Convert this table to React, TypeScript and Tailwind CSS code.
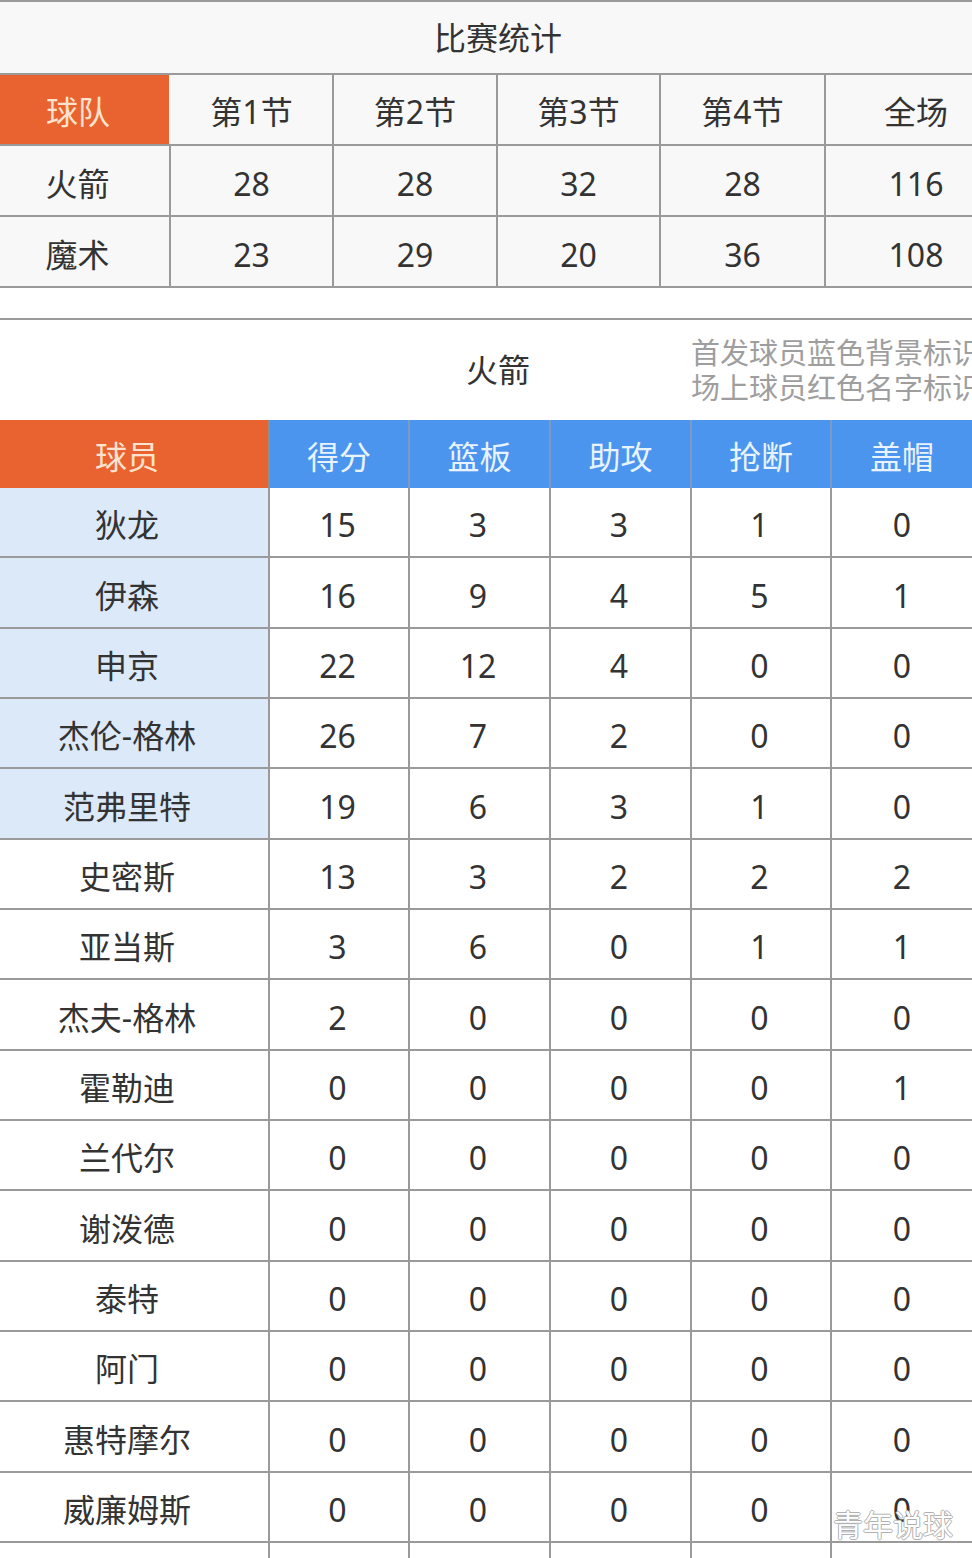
import React from "react";

const quarterRows = [
  ["火箭", "28", "28", "32", "28", "116"],
  ["魔术", "23", "29", "20", "36", "108"],
];

const players: [string, string, string, string, string, string][] = [
  ["狄龙", "15", "3", "3", "1", "0"],
  ["伊森", "16", "9", "4", "5", "1"],
  ["申京", "22", "12", "4", "0", "0"],
  ["杰伦-格林", "26", "7", "2", "0", "0"],
  ["范弗里特", "19", "6", "3", "1", "0"],
  ["史密斯", "13", "3", "2", "2", "2"],
  ["亚当斯", "3", "6", "0", "1", "1"],
  ["杰夫-格林", "2", "0", "0", "0", "0"],
  ["霍勒迪", "0", "0", "0", "0", "1"],
  ["兰代尔", "0", "0", "0", "0", "0"],
  ["谢泼德", "0", "0", "0", "0", "0"],
  ["泰特", "0", "0", "0", "0", "0"],
  ["阿门", "0", "0", "0", "0", "0"],
  ["惠特摩尔", "0", "0", "0", "0", "0"],
  ["威廉姆斯", "0", "0", "0", "0", "0"],
];

const rowHeights = ["h-[70px]", "h-[71px]", "h-[70px]"];

const topGrid = "grid grid-cols-[171px_163px_164px_163px_165px_1fr]";
const playerGrid = "grid grid-cols-[270px_140px_141px_141px_140px_1fr]";

export default function App() {
  return (
    <div className="relative w-[972px] h-[1558px] overflow-hidden bg-white font-['Noto_Sans','Noto_Sans_CJK_SC',sans-serif] text-[#333333] text-[32px] leading-none">
      {/* Top quarter table */}
      <div className="bg-[#f8f8f8]">
        <div className="h-[75px] border-y-2 border-[#9a9a9a] flex items-center justify-center pl-[24px]">
          比赛统计
        </div>
        <div className={`${topGrid} h-[71px] border-b-2 border-[#9a9a9a]`}>
          <div className="bg-[#e8632f] text-[#fde3cf] flex items-center justify-center border-r-2 border-[#f8f8f8] pr-[13px] pt-[4px]">
            球队
          </div>
          {["第1节", "第2节", "第3节", "第4节"].map((q) => (
            <div key={q} className="flex items-center justify-center border-r-2 border-[#9a9a9a] pt-[4px]">
              {q}
            </div>
          ))}
          <div className="flex items-center justify-center pl-[34px] pt-[4px]">全场</div>
        </div>
        {quarterRows.map((r) => (
          <div key={r[0]} className={`${topGrid} h-[71px] border-b-2 border-[#9a9a9a]`}>
            {r.map((c, i) => (
              <div
                key={i}
                className={
                  i === 0
                    ? "flex items-center justify-center border-r-2 border-[#9a9a9a] pr-[14px] pt-[6px]"
                    : i === 5
                    ? "flex items-center justify-center pl-[34px] pt-[6px]"
                    : "flex items-center justify-center border-r-2 border-[#9a9a9a] pt-[6px]"
                }
              >
                {c}
              </div>
            ))}
          </div>
        ))}
      </div>

      <div className="h-[30px]" />

      {/* Team header */}
      <div className="relative h-[102px] border-t-2 border-[#9a9a9a] flex items-center justify-center pl-[24px]">
        <span>火箭</span>
        <div className="absolute left-[691px] top-[15px] whitespace-nowrap text-[29px] leading-[35px] text-[#9e9e9e]">
          <div>首发球员蓝色背景标识</div>
          <div>场上球员红色名字标识</div>
        </div>
      </div>

      {/* Player header row */}
      <div className={`${playerGrid} h-[68px] text-[#e8f3ff]`}>
        <div className="bg-[#e8632f] text-[#fde3cf] flex items-center justify-center border-r-2 border-[#9a8a80] pr-[14px] pt-[6px]">
          球员
        </div>
        {["得分", "篮板", "助攻", "抢断", "盖帽"].map((h, i) => (
          <div
            key={h}
            className={
              i === 4
                ? "bg-[#4b95ee] flex items-center justify-center pt-[6px]"
                : "bg-[#4b95ee] flex items-center justify-center border-r-2 border-[#7d9bc2] pt-[6px]"
            }
          >
            {h}
          </div>
        ))}
      </div>

      {/* Player rows */}
      {players.map((p, idx) => (
        <div
          key={p[0]}
          className={`${playerGrid} ${rowHeights[idx % 3]} border-b-2 border-[#9a9a9a]`}
        >
          {p.map((c, i) => (
            <div
              key={i}
              className={
                i === 0
                  ? idx < 5
                    ? "bg-[#dbe9f9] flex items-center justify-center border-r-2 border-[#9a9a9a] pr-[14px] pt-[6px]"
                    : "flex items-center justify-center border-r-2 border-[#9a9a9a] pr-[14px] pt-[6px]"
                  : i === 5
                  ? "flex items-center justify-center pt-[6px]"
                  : "flex items-center justify-center border-r-2 border-[#9a9a9a] pr-[3px] pt-[6px]"
              }
            >
              {c}
            </div>
          ))}
        </div>
      ))}
      <div className={`${playerGrid} h-[20px]`}>
        {[0, 1, 2, 3, 4].map((i) => (
          <div key={i} className="border-r-2 border-[#9a9a9a]" />
        ))}
        <div />
      </div>

      {/* Watermark */}
      <div className="absolute left-[833px] top-[1508px] text-[30px] leading-none whitespace-nowrap text-white font-['Noto_Sans_CJK_SC',sans-serif] [text-shadow:1px_0_0_#b0b0b0,-1px_0_0_#b0b0b0,0_1px_0_#b0b0b0,0_-1px_0_#b0b0b0]">
        青年说球
      </div>
    </div>
  );
}
